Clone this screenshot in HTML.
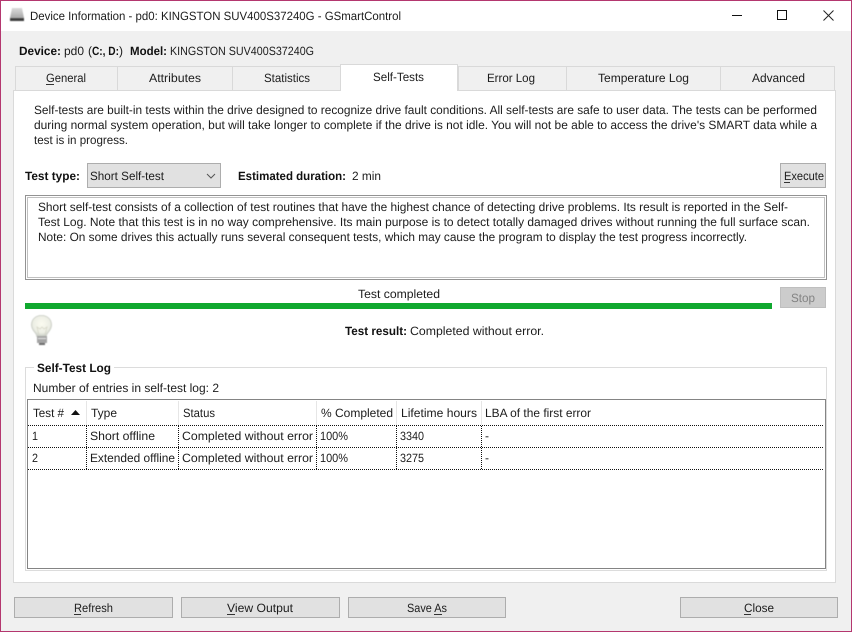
<!DOCTYPE html>
<html><head><meta charset="utf-8"><title>Device Information</title>
<style>
html,body{margin:0;padding:0;background:#f0f0f0}
svg{display:block}
text{font-family:"Liberation Sans",sans-serif;font-size:12px;fill:#1c1c1c;text-rendering:geometricPrecision}
.b{font-weight:bold;fill:#111}
</style></head><body>
<svg width="852" height="632" viewBox="0 0 852 632" xmlns="http://www.w3.org/2000/svg">
<defs>
<radialGradient id="bulb" cx="50%" cy="40%" r="60%"><stop offset="0" stop-color="#fbfbf0"/><stop offset="0.7" stop-color="#eceee4"/><stop offset="1" stop-color="#c8ccc4"/></radialGradient>
<linearGradient id="drive" x1="0" y1="0" x2="0" y2="1"><stop offset="0" stop-color="#dcdcdc"/><stop offset="1" stop-color="#a8a8a8"/></linearGradient>
<filter id="soft" x="-20%" y="-20%" width="140%" height="140%"><feGaussianBlur stdDeviation="0.4"/></filter>
</defs>
<rect width="852" height="632" fill="#f0f0f0"/>
<rect x="0" y="0" width="852" height="31" fill="#fff"/>
<rect x="0.5" y="0.5" width="851" height="631" fill="none" stroke="#b4376f"/>

<!-- title bar -->
<g filter="url(#soft)">
<path d="M12 8h10l2 10H10z" fill="url(#drive)"/>
<rect x="10" y="18" width="14" height="3" fill="#3c3c3c"/>
</g>
<text x="30" y="20" textLength="371" lengthAdjust="spacingAndGlyphs">Device Information - pd0: KINGSTON SUV400S37240G - GSmartControl</text>
<path d="M732 15.5h10" stroke="#111" fill="none"/>
<rect x="777.5" y="10.5" width="9" height="9" fill="none" stroke="#111"/>
<path d="M823.5 10.5l10 10M833.5 10.5l-10 10" stroke="#222" fill="none"/>

<!-- device line -->
<text class="b" x="19" y="55" textLength="42" lengthAdjust="spacingAndGlyphs">Device:</text>
<text x="64" y="55" textLength="20" lengthAdjust="spacingAndGlyphs">pd0</text>
<text x="88" y="55" textLength="4" lengthAdjust="spacingAndGlyphs">(</text>
<text class="b" x="92" y="55" textLength="27" lengthAdjust="spacingAndGlyphs">C:, D:</text>
<text x="119" y="55" textLength="4" lengthAdjust="spacingAndGlyphs">)</text>
<text class="b" x="130" y="55" textLength="37" lengthAdjust="spacingAndGlyphs">Model:</text>
<text x="170" y="55" textLength="144" lengthAdjust="spacingAndGlyphs">KINGSTON SUV400S37240G</text>

<!-- panel -->
<rect x="13.5" y="90.5" width="822" height="492" fill="#fff" stroke="#dadada"/>

<!-- tabs -->
<g fill="#f0f0f0" stroke="#d9d9d9">
<rect x="15.5" y="66.5" width="102" height="24"/>
<rect x="117.5" y="66.5" width="115" height="24"/>
<rect x="232.5" y="66.5" width="108" height="24"/>
<rect x="458.5" y="66.5" width="108" height="24"/>
<rect x="566.5" y="66.5" width="154" height="24"/>
<rect x="720.5" y="66.5" width="114" height="24"/>
</g>
<path d="M340.5 91V64.5H457.5V91" fill="#fff" stroke="#d9d9d9"/>
<rect x="341" y="65" width="116" height="27" fill="#fff"/>
<text x="46" y="82" textLength="40" lengthAdjust="spacingAndGlyphs">General</text>
<rect x="46" y="84" width="8" height="1" fill="#333"/>
<text x="149" y="82" textLength="52" lengthAdjust="spacingAndGlyphs">Attributes</text>
<text x="264" y="82" textLength="46" lengthAdjust="spacingAndGlyphs">Statistics</text>
<text x="373" y="81" textLength="51" lengthAdjust="spacingAndGlyphs">Self-Tests</text>
<text x="487" y="82" textLength="48" lengthAdjust="spacingAndGlyphs">Error Log</text>
<text x="598" y="82" textLength="91" lengthAdjust="spacingAndGlyphs">Temperature Log</text>
<text x="752" y="82" textLength="53" lengthAdjust="spacingAndGlyphs">Advanced</text>

<!-- intro -->
<text x="34" y="114" textLength="783" lengthAdjust="spacingAndGlyphs">Self-tests are built-in tests within the drive designed to recognize drive fault conditions. All self-tests are safe to user data. The tests can be performed</text>
<text x="34" y="129" textLength="783" lengthAdjust="spacingAndGlyphs">during normal system operation, but will take longer to complete if the drive is not idle. You will not be able to access the drive's SMART data while a</text>
<text x="34" y="144" textLength="94" lengthAdjust="spacingAndGlyphs">test is in progress.</text>

<!-- test type row -->
<text class="b" x="25" y="180" textLength="55" lengthAdjust="spacingAndGlyphs">Test type:</text>
<rect x="87.5" y="163.5" width="133" height="24" fill="#e1e1e1" stroke="#adadad"/>
<text x="90" y="180" textLength="74" lengthAdjust="spacingAndGlyphs">Short Self-test</text>
<path d="M207 174l4 4 4-4" fill="none" stroke="#555"/>
<text class="b" x="238" y="180" textLength="108" lengthAdjust="spacingAndGlyphs">Estimated duration:</text>
<text x="352" y="180" textLength="29" lengthAdjust="spacingAndGlyphs">2 min</text>
<rect x="780.5" y="163.5" width="45" height="24" fill="#e1e1e1" stroke="#adadad"/>
<text x="784" y="180" textLength="40" lengthAdjust="spacingAndGlyphs">Execute</text>
<rect x="784" y="182" width="6" height="1" fill="#333"/>

<!-- description box -->
<rect x="25.5" y="195.5" width="801" height="84" fill="#fff" stroke="#939393"/>
<rect x="27.5" y="197.5" width="797" height="80" fill="#fff" stroke="#c0c0c0"/>
<text x="38" y="211" textLength="750" lengthAdjust="spacingAndGlyphs">Short self-test consists of a collection of test routines that have the highest chance of detecting drive problems. Its result is reported in the Self-</text>
<text x="38" y="226" textLength="772" lengthAdjust="spacingAndGlyphs">Test Log. Note that this test is in no way comprehensive. Its main purpose is to detect totally damaged drives without running the full surface scan.</text>
<text x="38" y="241" textLength="709" lengthAdjust="spacingAndGlyphs">Note: On some drives this actually runs several consequent tests, which may cause the program to display the test progress incorrectly.</text>

<!-- progress -->
<text x="358" y="298" textLength="82" lengthAdjust="spacingAndGlyphs">Test completed</text>
<rect x="25" y="303" width="747" height="6" fill="#10a82f"/>
<rect x="780.5" y="287.5" width="45" height="20" fill="#cccccc" stroke="#bfbfbf"/>
<text x="791" y="302" textLength="24" lengthAdjust="spacingAndGlyphs" style="fill:#838383">Stop</text>

<!-- bulb -->
<g filter="url(#soft)">
<path d="M41.500 315.500c-6 0-10 4-10 9.500 0 4.500 3 6.500 4.500 9 .5 1 .8 1.500 .8 2.500h9.400c0-1 .3-1.500 .8-2.500 1.500-2.500 4.500-4.500 4.500-9 0-5.500-4-9.500-10-9.500z" fill="url(#bulb)" stroke="#cfd2ca"/>
<path d="M39 335l-2-8 3 2 2-2 2 2 3-2-2 8" fill="none" stroke="#d6d6c8" stroke-width=".8"/>
<rect x="37" y="336" width="10" height="7" fill="#a4a4a4"/>
<rect x="38" y="338" width="8" height="1" fill="#e2e2e2"/>
<rect x="39" y="343" width="6" height="2" fill="#6c6c6c"/>
</g>

<text class="b" x="345" y="335" textLength="62" lengthAdjust="spacingAndGlyphs">Test result:</text>
<text x="410" y="335" textLength="134" lengthAdjust="spacingAndGlyphs">Completed without error.</text>

<!-- group -->
<rect x="25.500" y="367.500" width="801" height="203" fill="#fff" stroke="#dcdcdc"/>
<rect x="34" y="360" width="80" height="14" fill="#fff"/>
<text class="b" x="37" y="372" textLength="74" lengthAdjust="spacingAndGlyphs">Self-Test Log</text>
<text x="33" y="392" textLength="186" lengthAdjust="spacingAndGlyphs">Number of entries in self-test log: 2</text>

<!-- table -->
<rect x="27.500" y="399.500" width="798" height="169" fill="#fff" stroke="#848484"/>
<path d="M86.500 401v24M178.500 401v24M316.500 401v24M396.500 401v24M481.500 401v24" stroke="#e6e6e6"/>
<text x="33" y="417" textLength="31" lengthAdjust="spacingAndGlyphs">Test #</text>
<path d="M71 415l4.500-5 4.500 5z" fill="#111"/>
<text x="91" y="417" textLength="26" lengthAdjust="spacingAndGlyphs">Type</text>
<text x="183" y="417" textLength="32" lengthAdjust="spacingAndGlyphs">Status</text>
<text x="321" y="417" textLength="72" lengthAdjust="spacingAndGlyphs">% Completed</text>
<text x="401" y="417" textLength="76" lengthAdjust="spacingAndGlyphs">Lifetime hours</text>
<text x="485" y="417" textLength="106" lengthAdjust="spacingAndGlyphs">LBA of the first error</text>

<g stroke="#111" stroke-dasharray="1 1" fill="none">
<path d="M28 425.500h796M28 447.500h796M28 469.500h796"/>
<path d="M86.500 426v44M178.500 426v44M316.500 426v44M396.500 426v44M481.500 426v44"/>
</g>
<text x="32" y="440" textLength="6" lengthAdjust="spacingAndGlyphs">1</text>
<text x="90" y="440" textLength="65" lengthAdjust="spacingAndGlyphs">Short offline</text>
<text x="182" y="440" textLength="131" lengthAdjust="spacingAndGlyphs">Completed without error</text>
<text x="320" y="440" textLength="28" lengthAdjust="spacingAndGlyphs">100%</text>
<text x="400" y="440" textLength="24" lengthAdjust="spacingAndGlyphs">3340</text>
<text x="485" y="440" textLength="4" lengthAdjust="spacingAndGlyphs">-</text>
<text x="32" y="462" textLength="6" lengthAdjust="spacingAndGlyphs">2</text>
<text x="90" y="462" textLength="85" lengthAdjust="spacingAndGlyphs">Extended offline</text>
<text x="182" y="462" textLength="131" lengthAdjust="spacingAndGlyphs">Completed without error</text>
<text x="320" y="462" textLength="28" lengthAdjust="spacingAndGlyphs">100%</text>
<text x="400" y="462" textLength="24" lengthAdjust="spacingAndGlyphs">3275</text>
<text x="485" y="462" textLength="4" lengthAdjust="spacingAndGlyphs">-</text>

<!-- bottom buttons -->
<g fill="#e1e1e1" stroke="#adadad">
<rect x="14.500" y="597.500" width="158" height="20"/>
<rect x="181.500" y="597.500" width="158" height="20"/>
<rect x="348.500" y="597.500" width="157" height="20"/>
<rect x="680.500" y="597.500" width="157" height="20"/>
</g>
<text x="74" y="612" textLength="39" lengthAdjust="spacingAndGlyphs">Refresh</text>
<rect x="74" y="614" width="7" height="1" fill="#333"/>
<text x="227" y="612" textLength="66" lengthAdjust="spacingAndGlyphs">View Output</text>
<rect x="227" y="614" width="8" height="1" fill="#333"/>
<text x="407" y="612" textLength="40" lengthAdjust="spacingAndGlyphs">Save As</text>
<rect x="434" y="614" width="8" height="1" fill="#333"/>
<text x="744" y="612" textLength="30" lengthAdjust="spacingAndGlyphs">Close</text>
<rect x="744" y="614" width="7" height="1" fill="#333"/>
</svg>
</body></html>
